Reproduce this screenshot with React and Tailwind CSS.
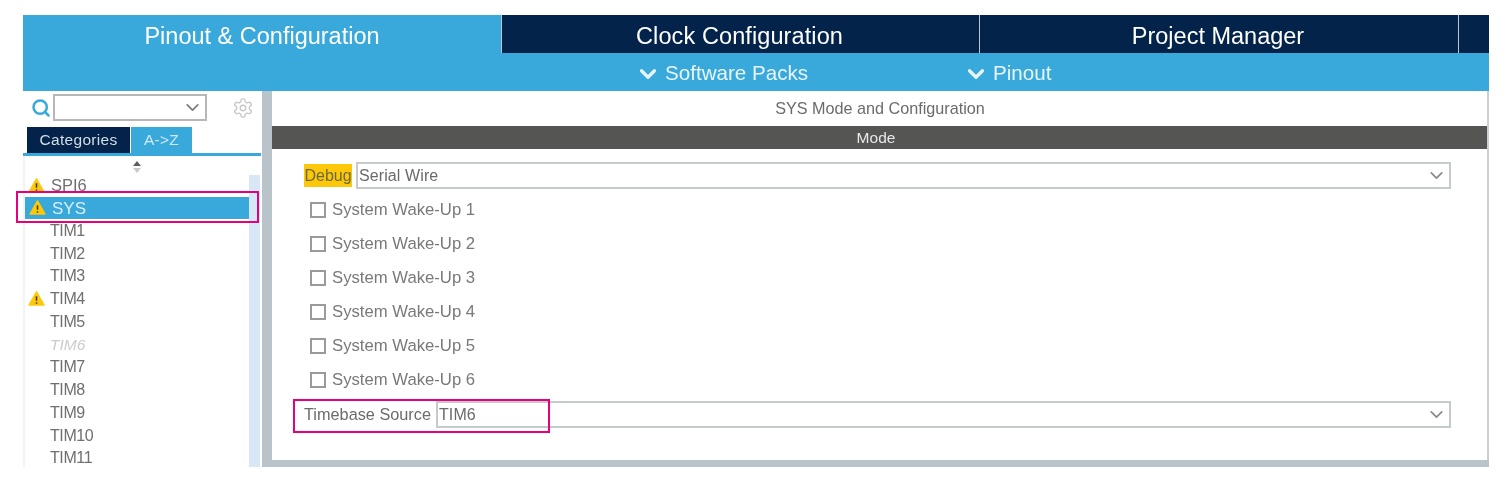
import { LuChevronDown, LuSearch, LuSettings } from 'react-icons/lu'

const items = [
  { name: 'TIM1' },
  { name: 'TIM2' },
  { name: 'TIM3' },
  { name: 'TIM4', warn: true },
  { name: 'TIM5' },
  { name: 'TIM6', disabled: true },
  { name: 'TIM7' },
  { name: 'TIM8' },
  { name: 'TIM9' },
  { name: 'TIM10' },
  { name: 'TIM11' },
]

function Warn({ className }) {
  return (
    <svg viewBox="0 0 18 16" className={className}>
      <path d="M9 1 L17 15 L1 15 Z" fill="#fdc80a" stroke="#fdc80a" strokeWidth="1.5" strokeLinejoin="round" />
      <path d="M9 5.5 V10.5 M9 12 V13.5" stroke="#3b3b2a" strokeWidth="1.6" />
    </svg>
  )
}

function Combo({ value, className }) {
  return (
    <div className={`flex h-[27px] items-center border-2 border-[#c4cacd] bg-white pr-[2px] pl-[1px] ${className}`}>
      <span className="flex-1 text-[16px] leading-none tracking-[0.1px] text-[#6a6a6a]">{value}</span>
      <LuChevronDown className="h-[21px] w-[21px] text-[#8a8a8a]" />
    </div>
  )
}

function WakeUp({ n }) {
  return (
    <div className="flex h-[34px] items-center pl-[38px]">
      <span className="h-[16px] w-[16px] border-2 border-[#9a9a9a] bg-white" />
      <span className="ml-[6px] pt-[1px] text-[16.7px] leading-none text-[#77797a]">System Wake-Up {n}</span>
    </div>
  )
}

function Row({ item }) {
  return (
    <div className="relative flex h-[22.75px] items-center pl-[27px] text-[16px] leading-none text-[#6f6f6f]">
      {item.warn && <Warn className="absolute top-[3px] left-[5px] h-[15px] w-[17px]" />}
      <span className={item.disabled ? 'text-[15.5px] italic text-[#c9cbcd]' : 'tracking-[-0.4px]'}>{item.name}</span>
    </div>
  )
}

export default function App() {
  return (
    <div className="relative h-[478px] w-[1506px] overflow-hidden bg-white pt-[15px] pl-[23px] font-['Liberation_Sans',Arial,sans-serif] blur-[0.6px]">
      <div className="flex h-[452px] w-[1466px] flex-col overflow-hidden">
        {/* main tabs */}
        <div className="flex h-[38px] bg-[#03234b] text-[23.5px] text-white">
          <div className="flex w-[478px] items-center justify-center bg-[#39a9dc] pt-[5px]">Pinout &amp; Configuration</div>
          <div className="flex w-[478px] items-center justify-center border-l border-[#b9c6d0] pt-[5px] pr-[2px] tracking-[0.1px]">Clock Configuration</div>
          <div className="flex w-[479px] items-center justify-center border-l border-[#b9c6d0] pt-[5px] pr-[2px]">Project Manager</div>
          <div className="w-[31px] border-l border-[#b9c6d0]" />
        </div>
        <div className="flex h-[38px] items-center bg-[#39a9dc] pt-[3px] pl-[612px] text-[20.6px] text-[#e8f4fa]">
          <LuChevronDown className="h-[26px] w-[26px]" strokeWidth={3} />
          <span className="ml-[4px] w-[298px]">Software Packs</span>
          <LuChevronDown className="h-[26px] w-[26px]" strokeWidth={3} />
          <span className="ml-[4px]">Pinout</span>
        </div>

        <div className="flex min-h-0 flex-1">
          {/* left panel */}
          <div className="flex w-[239px] shrink-0 flex-col">
            <div className="flex h-[36px] items-center pb-[3px]">
              <LuSearch className="ml-[8px] h-[20px] w-[20px] text-[#39a9dc]" strokeWidth={3} />
              <div className="ml-[2px] flex h-[27px] w-[154px] items-center justify-end border-2 border-[#b5b7b8] pr-[2px]">
                <LuChevronDown className="h-[21px] w-[21px] text-[#7d7d7d]" />
              </div>
              <LuSettings className="ml-[25px] h-[22px] w-[22px] text-[#c8c8c8]" strokeWidth={1.5} />
            </div>
            <div className="flex h-[26px] pl-[4px] text-[15.5px] tracking-[0.3px]">
              <div className="flex w-[103px] items-center justify-center bg-[#03234b] text-[#d5dde3]">Categories</div>
              <div className="ml-[1px] flex w-[61px] items-center justify-center bg-[#39a9dc] text-[#cfe8f5]">A-&gt;Z</div>
            </div>
            <div className="h-[3px] w-[238px] bg-[#39a9dc]" />
            <div className="relative min-h-0 flex-1 border-l-2 border-[#f1f3f5]">
              <div className="flex h-[19px] items-center justify-center pr-[14px]">
                <svg viewBox="0 0 10 14" className="mt-[2px] h-[14px] w-[10px]">
                  <path d="M5 1 L9 6 H1 Z" fill="#5d5d5d" />
                  <path d="M5 13 L9 8 H1 Z" fill="#c8c8c8" />
                </svg>
              </div>
              <div className="flex h-[calc(100%-19px)]">
                <div className="w-[224px] shrink-0">
                  <div className="relative flex h-[22px] items-center pb-[2px] pl-[26px] text-[16.5px] leading-none text-[#6f6f6f]">
                    <Warn className="absolute top-[3px] left-[3px] h-[15px] w-[17px]" />
                    SPI6
                  </div>
                  <div className="relative flex h-[22px] items-center bg-[#39a9dc] pl-[27px] text-[17px] leading-none text-[#d8eef8]">
                    <Warn className="absolute top-[3px] left-[4px] h-[15px] w-[17px]" />
                    SYS
                  </div>
                  <div className="-ml-[2px] pt-[0.5px]">
                    {items.map((item) => (
                      <Row key={item.name} item={item} />
                    ))}
                  </div>
                </div>
                <div className="w-[11px] bg-[#d8e7f5]" />
              </div>
            </div>
          </div>

          {/* right panel */}
          <div className="flex min-w-0 flex-1 flex-col border-l-[10px] border-[#b8c4ca]">
            <div className="flex flex-1 flex-col border-r-2 border-[#c8d0d6]">
              <div className="flex h-[35px] items-center justify-center pl-[1px] text-[16.2px] text-[#6b6b6b]">SYS Mode and Configuration</div>
              <div className="flex h-[23px] items-center justify-center bg-[#555654] pr-[7px] text-[15.5px] text-[#e8e8e8]">Mode</div>
              <div className="flex-1 pt-[13px]">
                <div className="flex h-[27px] items-center pl-[32px]">
                  <span className="flex h-[23px] w-[48px] items-center justify-center bg-[#fdc80a] text-[16px] leading-none text-[#6b6a3a]">Debug</span>
                  <Combo value="Serial Wire" className="ml-[4px] w-[1095px]" />
                </div>
                <div className="mt-[4px]">
                  {[1, 2, 3, 4, 5, 6].map((n) => (
                    <WakeUp key={n} n={n} />
                  ))}
                </div>
                <div className="mt-[4px] flex h-[27px] items-center pl-[32px]">
                  <span className="w-[132px] text-[16.3px] leading-none text-[#6b6b6b]">Timebase Source</span>
                  <Combo value="TIM6" className="w-[1015px]" />
                </div>
              </div>
            </div>
            <div className="h-[7px] bg-[#b8c4ca]" />
          </div>
        </div>
      </div>

      {/* highlight boxes */}
      <div className="absolute top-[191px] left-[16px] h-[32px] w-[243px] border-2 border-[#e6007e]" />
      <div className="absolute top-[399px] left-[293px] h-[34px] w-[257px] border-2 border-[#e6007e]" />
    </div>
  )
}
